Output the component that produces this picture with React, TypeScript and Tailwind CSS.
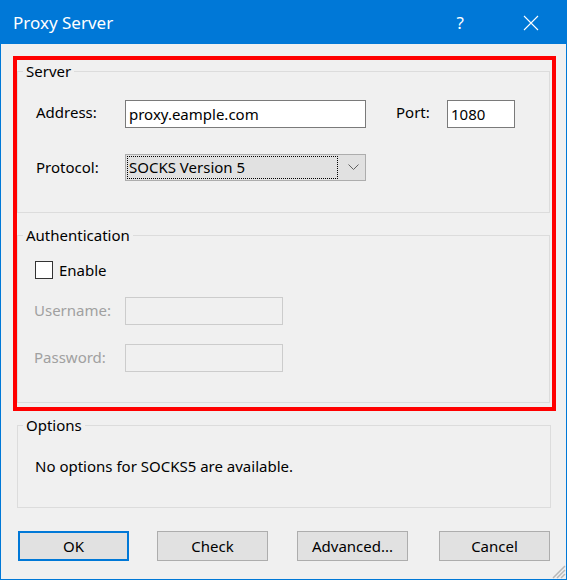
import React from "react";

function Group({
  title,
  className,
  children,
}: {
  title: string;
  className?: string;
  children: React.ReactNode;
}) {
  return (
    <fieldset className={"border border-[#dcdcdc] px-[9px] " + (className ?? "")}>
      <legend className="ml-[-4px] px-[3px] h-[20px] leading-[20px] text-[15px] text-black">{title}</legend>
      {children}
    </fieldset>
  );
}

function Btn({ label, primary, className }: { label: string; primary?: boolean; className?: string }) {
  return (
    <button
      className={
        "w-[111px] h-[30px] bg-[#e1e1e1] text-[15px] text-black flex items-center justify-center " +
        (primary ? "border-2 border-[#0078d7] " : "border border-[#adadad] ") +
        (className ?? "")
      }
    >
      {label}
    </button>
  );
}

export default function App() {
  return (
    <div className="relative w-[567px] h-[580px] bg-[#f0f0f0] border-x border-b border-[#0078d7] flex flex-col font-['Noto_Sans',sans-serif] text-[15px] text-black overflow-hidden">
      {/* Title bar */}
      <div className="h-[44px] shrink-0 bg-[#0078d7] flex items-center pl-[12px] text-white">
        <span className="text-[17px] leading-none mt-[1px]">Proxy Server</span>
        <span className="ml-auto text-[17px] leading-none mr-[59px] mt-[1px]">?</span>
        <svg width="16" height="16" viewBox="0 0 16 16" className="mr-[27px] mt-[1px]">
          <path d="M1 1 L15 15 M15 1 L1 15" stroke="white" strokeWidth="1.1" fill="none" />
        </svg>
      </div>

      {/* Highlighted area */}
      <div className="ml-[12px] mt-[12px] w-[543px] border-4 border-[#ff0000] pt-[1px] pb-[4px] pr-[2px]">
        <Group title="Server" className="pb-[31px]">
          <div className="mt-[19px] flex items-center h-[28px]">
            <span className="w-[98px] pl-[9px] -mt-[4px]">Address:</span>
            <div className="w-[241px] h-[28px] bg-white border border-[#7a7a7a] flex items-center pl-[3px]">
              proxy.eample.com
            </div>
            <span className="ml-[30px] w-[51px] -mt-[4px]">Port:</span>
            <div className="w-[68px] h-[28px] bg-white border border-[#7a7a7a] flex items-center pl-[3px]">
              1080
            </div>
          </div>
          <div className="mt-[26px] flex items-center h-[27px]">
            <span className="w-[98px] pl-[9px]">Protocol:</span>
            <div className="w-[241px] h-[27px] bg-[#e1e1e1] border border-[#adadad] flex items-center">
              <div className="ml-[1px] w-[211px] h-[23px] border border-dotted border-black flex items-center pl-[1px]">
                SOCKS Version 5
              </div>
              <svg width="11" height="7" viewBox="0 0 11 7" className="ml-[10px]">
                <path d="M0.5 0.5 L5.5 5.5 L10.5 0.5" stroke="#606060" strokeWidth="1" fill="none" />
              </svg>
            </div>
          </div>
        </Group>

        <Group title="Authentication" className="mt-[12px] pb-[30px]">
          <div className="mt-[16px] flex items-center h-[18px] pl-[8px]">
            <div className="w-[18px] h-[18px] bg-white border border-[#333333]" />
            <span className="ml-[6px]">Enable</span>
          </div>
          <div className="mt-[18px] flex items-center h-[28px]">
            <span className="w-[98px] pl-[7px] text-[#a0a0a0] -mt-[2px]">Username:</span>
            <div className="w-[158px] h-[28px] bg-[#f0f0f0] border border-[#cccccc]" />
          </div>
          <div className="mt-[19px] flex items-center h-[28px]">
            <span className="w-[98px] pl-[7px] text-[#a0a0a0] -mt-[2px]">Password:</span>
            <div className="w-[158px] h-[28px] bg-[#f0f0f0] border border-[#cccccc]" />
          </div>
        </Group>
      </div>

      {/* Options */}
      <Group title="Options" className="ml-[16px] mt-[4px] w-[534px] pb-[31px]">
        <div className="mt-[21px] h-[20px] leading-[20px] pl-[8px]">No options for SOCKS5 are available.</div>
      </Group>

      {/* Buttons */}
      <div className="ml-[17px] mt-[23px] flex">
        <Btn label="OK" primary />
        <Btn label="Check" className="ml-[28px]" />
        <Btn label="Advanced..." className="ml-[29px]" />
        <Btn label="Cancel" className="ml-[31px]" />
      </div>

      {/* Resize grip */}
      <svg width="14" height="14" viewBox="0 0 14 14" className="absolute right-0 bottom-0">
        <path d="M13 1 L1 13 M13 5 L5 13 M13 9 L9 13" stroke="#b8b8b8" strokeWidth="1.5" fill="none" />
      </svg>
    </div>
  );
}
